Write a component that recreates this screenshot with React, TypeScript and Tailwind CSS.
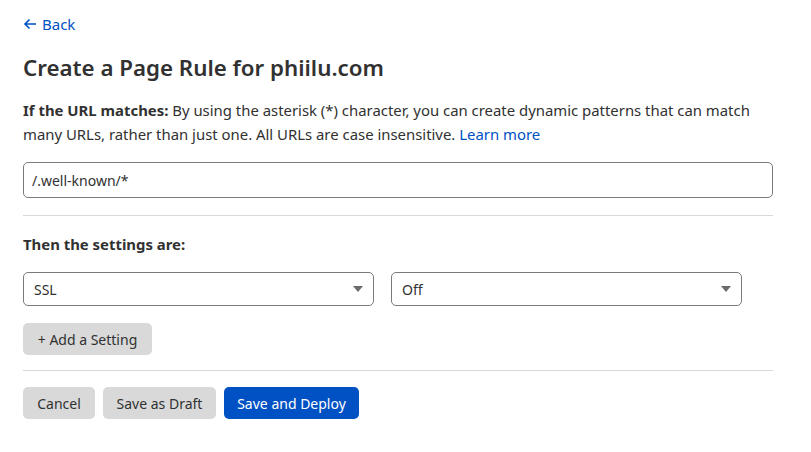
import React from "react";

function Caret() {
  return (
    <svg width="10" height="6" viewBox="0 0 10 6" className="shrink-0">
      <path d="M0 0 L10 0 L5 6 Z" fill="#6b6b6b" />
    </svg>
  );
}

function Select({ value, w }: { value: string; w: string }) {
  return (
    <div className={`${w} h-[34px] border border-[#7a7a7a] rounded-[5px] flex items-center justify-between pl-[10px] pr-[10px] text-[14px] text-[#313131]`}>
      <span>{value}</span>
      <Caret />
    </div>
  );
}

export default function App() {
  return (
    <div className="w-[811px] h-[452px] bg-white text-[#313131] font-['Noto_Sans',sans-serif] px-[23px] pt-[12px]">
      <div className="w-[750px]">
        <a className="flex items-center gap-[5px] text-[#0051c3] text-[15px] h-[24px]">
          <svg width="14" height="12" viewBox="0 0 14 12">
            <path d="M13 6 H2 M6.5 1.5 L2 6 L6.5 10.5" stroke="#0051c3" strokeWidth="1.6" fill="none" />
          </svg>
          Back
        </a>
        <h1 className="text-[22.3px] font-semibold leading-[30px] mt-[17px] text-[#313131]">Create a Page Rule for phiilu.com</h1>
        <p className="text-[14.9px] leading-[24px] mt-[15px]">
          <span className="font-bold">If the URL matches:</span> By using the asterisk (*) character, you can create dynamic patterns that can match many URLs, rather than just one. All URLs are case insensitive. <span className="text-[#0051c3]">Learn more</span>
        </p>
        <div className="mt-[16px] h-[36px] border border-[#7a7a7a] rounded-[5px] flex items-center pl-[8px] text-[14px]">/.well-known/*</div>
        <div className="mt-[17px] border-t border-[#d9d9d9]" />
        <div className="mt-[16px] text-[14.9px] font-bold leading-[24px]">Then the settings are:</div>
        <div className="mt-[16px] flex gap-[17px]">
          <Select value="SSL" w="w-[351px]" />
          <Select value="Off" w="w-[351px]" />
        </div>
        <button className="mt-[17px] h-[32px] w-[129px] rounded-[5px] bg-[#d9d9d9] text-[14px] text-[#313131]">+ Add a Setting</button>
        <div className="mt-[15px] border-t border-[#d9d9d9]" />
        <div className="mt-[16px] flex gap-[8px]">
          <button className="h-[32px] w-[72px] rounded-[5px] bg-[#d9d9d9] text-[14px]">Cancel</button>
          <button className="h-[32px] w-[113px] rounded-[5px] bg-[#d9d9d9] text-[14px]">Save as Draft</button>
          <button className="h-[32px] w-[135px] rounded-[5px] bg-[#0051c3] text-white text-[14px]">Save and Deploy</button>
        </div>
      </div>
    </div>
  );
}
